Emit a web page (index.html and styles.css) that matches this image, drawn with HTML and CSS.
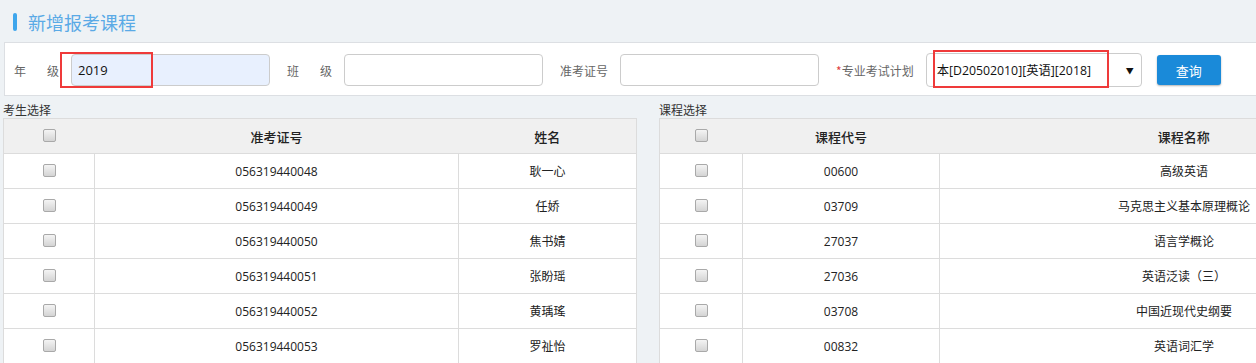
FILE: index.html
```html
<!DOCTYPE html>
<html lang="zh-CN">
<head>
  <meta charset="UTF-8" />
  <title>新增报考课程</title>
  <link rel="stylesheet" href="styles.css">
</head>
<body>
  <div class="page">
    <!-- 标题 -->
    <div class="page-title">
      <span class="title-bar"></span>
      <span class="title-text">新增报考课程</span>
    </div>

    <!-- 查询条件 -->
    <div class="filter">
      <label class="lbl"><span>年</span><span>级</span></label>
      <input class="field field-filled" type="text" value="2019" />
      <label class="lbl"><span>班</span><span>级</span></label>
      <input class="field" type="text" />
      <label class="lbl lbl-plain">准考证号</label>
      <input class="field" type="text" />
      <label class="lbl lbl-plain"><em class="req">*</em>专业考试计划</label>
      <div class="select">
        <span class="select-text">本[D20502010][英语][2018]</span>
        <span class="select-arrow">▼</span>
      </div>
      <button class="btn">查询</button>
    </div>

    <!-- 列表 -->
    <div class="lists">
      <div class="block block-student">
        <div class="caption">考生选择</div>
        <table class="grid">
          <colgroup>
            <col style="width:91px"><col style="width:364px"><col>
          </colgroup>
          <thead>
            <tr><th><span class="chk"></span></th><th>准考证号</th><th>姓名</th></tr>
          </thead>
          <tbody>
            <tr><td><span class="chk"></span></td><td>056319440048</td><td>耿一心</td></tr>
            <tr><td><span class="chk"></span></td><td>056319440049</td><td>任娇</td></tr>
            <tr><td><span class="chk"></span></td><td>056319440050</td><td>焦书婧</td></tr>
            <tr><td><span class="chk"></span></td><td>056319440051</td><td>张盼瑶</td></tr>
            <tr><td><span class="chk"></span></td><td>056319440052</td><td>黄瑀瑤</td></tr>
            <tr><td><span class="chk"></span></td><td>056319440053</td><td>罗祉怡</td></tr>
          </tbody>
        </table>
      </div>

      <div class="block block-course">
        <div class="caption">课程选择</div>
        <table class="grid">
          <colgroup>
            <col style="width:83px"><col style="width:197px"><col>
          </colgroup>
          <thead>
            <tr><th><span class="chk"></span></th><th>课程代号</th><th>课程名称</th></tr>
          </thead>
          <tbody>
            <tr><td><span class="chk"></span></td><td>00600</td><td>高级英语</td></tr>
            <tr><td><span class="chk"></span></td><td>03709</td><td>马克思主义基本原理概论</td></tr>
            <tr><td><span class="chk"></span></td><td>27037</td><td>语言学概论</td></tr>
            <tr><td><span class="chk"></span></td><td>27036</td><td>英语泛读（三）</td></tr>
            <tr><td><span class="chk"></span></td><td>03708</td><td>中国近现代史纲要</td></tr>
            <tr><td><span class="chk"></span></td><td>00832</td><td>英语词汇学</td></tr>
          </tbody>
        </table>
      </div>
    </div>

    <!-- 标注框 -->
    <div class="mark mark-grade"></div>
    <div class="mark mark-plan"></div>
  </div>
</body>
</html>
```

FILE: styles.css
```css
html, body {
  margin: 0;
  padding: 0;
  background: #eef2f5;
  overflow: hidden;
  font-family: "Open Sans", "Noto Sans CJK SC", sans-serif;
  color: #333;
}

.page {
  position: relative;
  width: 1440px;
}

.page-title {
  height: 42px;
  display: flex;
  align-items: center;
  padding: 1px 0 0 13px;
  box-sizing: border-box;
}

.title-bar {
  width: 4px;
  height: 18px;
  border-radius: 2px;
  background: #3ea6ec;
  margin-right: 11px;
}

.title-text {
  font-family: "Noto Sans CJK SC", sans-serif;
  font-size: 18px;
  color: #5aaae6;
  line-height: 24px;
}

.filter {
  margin-left: 4px;
  height: 54px;
  box-sizing: border-box;
  background: #fff;
  border: 1px solid #dcdfe3;
  border-right: none;
  display: flex;
  align-items: center;
  padding: 2px 0 0 9px;
}

.lbl {
  display: flex;
  justify-content: space-between;
  width: 45px;
  margin-right: 12px;
  font-family: "Noto Sans CJK SC", sans-serif;
  font-size: 12px;
  color: #666;
}

.lbl-plain {
  display: block;
  width: auto;
  margin-right: 12px;
}

.req {
  font-style: normal;
  color: #e04040;
}

.field {
  width: 199px;
  height: 32px;
  box-sizing: border-box;
  border: 1px solid #ccc;
  border-radius: 4px;
  padding: 0 6px;
  font-family: "Open Sans", sans-serif;
  font-size: 13px;
  color: #111;
  background: #fff;
  margin-right: 17px;
  outline: none;
}

.field-filled {
  background: #e8f0fe;
}

.select {
  width: 216px;
  height: 34px;
  box-sizing: border-box;
  border: 1px solid #ccc;
  border-radius: 4px;
  display: flex;
  align-items: center;
  justify-content: space-between;
  padding: 0 7px 0 10px;
  margin-right: 15px;
  background: #fff;
}

.select-text {
  font-size: 12.3px;
  color: #111;
  white-space: nowrap;
}

.select-arrow {
  font-size: 8px;
  color: #111;
}

.btn {
  width: 64px;
  height: 30px;
  border: none;
  border-radius: 3px;
  background: #1a8ad9;
  color: #fff;
  font-family: "Noto Sans CJK SC", sans-serif;
  font-size: 13px;
  box-shadow: 0 1px 2px rgba(0, 0, 0, 0.3);
  cursor: pointer;
}

.lists {
  display: flex;
  gap: 22px;
  padding: 6px 0 0 3px;
}

.block-student {
  width: 634px;
}

.block-course {
  width: 770px;
}

.caption {
  height: 16px;
  line-height: 16px;
  font-family: "Noto Sans CJK SC", sans-serif;
  font-size: 12px;
  color: #333;
}

.grid {
  width: 100%;
  border-collapse: collapse;
  table-layout: fixed;
  background: #fff;
  border: 1px solid #dcdcdc;
}

.grid th,
.grid td {
  height: 34px;
  padding: 0;
  border: 1px solid #dcdcdc;
  text-align: center;
  vertical-align: middle;
}

.grid th {
  background: #f0f0f0;
  font-family: "Noto Sans CJK SC", sans-serif;
  font-size: 13px;
  font-weight: 500;
  color: #222;
}

.grid td {
  font-size: 12px;
  color: #222;
}

.grid thead th {
  border-left: none;
  border-right: none;
}

.chk {
  display: inline-block;
  width: 11px;
  height: 11px;
  border: 1px solid #a9a9a9;
  border-radius: 2px;
  background: linear-gradient(#f4f4f4, #d4d4d4);
  vertical-align: middle;
  position: relative;
  top: -2px;
}

.mark {
  position: absolute;
  border: 2px solid #ef3a3a;
  box-sizing: border-box;
}

.mark-grade {
  left: 60px;
  top: 52px;
  width: 93px;
  height: 36px;
}

.mark-plan {
  left: 933px;
  top: 50px;
  width: 176px;
  height: 38px;
}
```
